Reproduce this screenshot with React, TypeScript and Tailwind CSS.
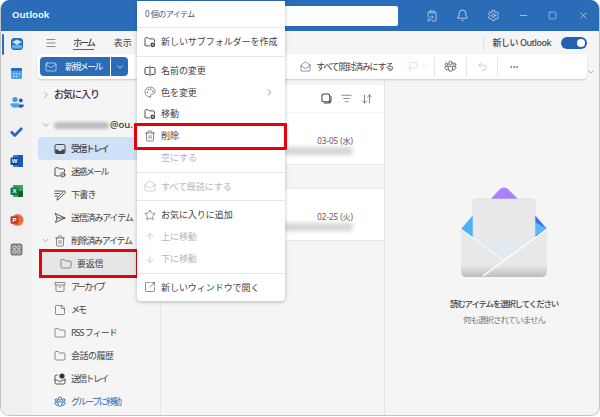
import {
  Archive,
  ArrowDown,
  ArrowDownUp,
  ArrowUp,
  Bell,
  ChevronDown,
  ChevronRight,
  ClipboardPen,
  Ellipsis,
  Flag,
  Folder,
  ListFilter,
  Mail,
  MailOpen,
  Menu,
  Minus,
  Palette,
  Settings,
  Square,
  SquareArrowOutUpRight,
  Star,
  StickyNote,
  Trash2,
  Undo2,
  X,
} from "lucide-react";
import type { ComponentType, ReactNode } from "react";

type IconProps = { className?: string; strokeWidth?: number };
type IconType = ComponentType<IconProps>;

// Outlook glyphs that lucide has no close match for
function Svg({ className, strokeWidth = 1.2, children }: IconProps & { children: ReactNode }) {
  return (
    <svg viewBox="0 0 12 12" className={className} fill="none" stroke="currentColor" strokeWidth={strokeWidth} strokeLinejoin="round" strokeLinecap="round">
      {children}
    </svg>
  );
}

function FolderBadge(p: IconProps) {
  return (
    <Svg {...p} strokeWidth={0.9}>
      <path d="M1 9V2.6c0-.5.4-.9.9-.9h2.3l1.1 1.2h4.3c.5 0 .9.4.9.9v2" />
      <path d="M1 9c0 .5.4.9.9.9h3.6" />
      <circle cx="8.8" cy="8.8" r="2.4" fill="#333" stroke="none" />
      <path d="M8.8 7.7v2.2M7.7 8.8h2.2" stroke="#fff" strokeWidth="0.6" />
    </Svg>
  );
}

function FolderBlock(p: IconProps) {
  return (
    <Svg {...p} strokeWidth={0.9}>
      <path d="M1 9V2.6c0-.5.4-.9.9-.9h2.3l1.1 1.2h4.3c.5 0 .9.4.9.9v2" />
      <path d="M1 9c0 .5.4.9.9.9h3.6" />
      <circle cx="8.8" cy="8.8" r="2.2" />
      <path d="M7.4 10.2l2.8-2.8" />
    </Svg>
  );
}

function Rename(p: IconProps) {
  return (
    <Svg {...p} strokeWidth={1}>
      <path d="M4.5 2.5H2.2c-.7 0-1.2.5-1.2 1.2v4.6c0 .7.5 1.2 1.2 1.2h2.3" />
      <path d="M7.5 2.5h2.3c.7 0 1.2.5 1.2 1.2v4.6c0 .7-.5 1.2-1.2 1.2H7.5" />
      <path d="M6 1v10" />
    </Svg>
  );
}

function InboxFilled(p: IconProps) {
  return (
    <svg viewBox="0 0 12 12" className={p.className}>
      <rect x="1" y="1.5" width="10" height="9" rx="1.6" fill="none" stroke="currentColor" strokeWidth="1" />
      <path d="M1.3 6.5h2.8c.3 1 1 1.5 1.9 1.5s1.6-.5 1.9-1.5h2.8v2.6c0 .8-.5 1.3-1.3 1.3H2.6c-.8 0-1.3-.5-1.3-1.3z" fill="currentColor" />
    </svg>
  );
}

function Outbox(p: IconProps) {
  return (
    <Svg {...p} strokeWidth={0.9}>
      <path d="M3.5 2H2.2C1.5 2 1 2.5 1 3.2v6.6c0 .7.5 1.2 1.2 1.2h7.6c.7 0 1.2-.5 1.2-1.2V6" />
      <path d="M1 7h2.6c.3.8 1.2 1.4 2.4 1.4S8.100 7.800 8.400 7H11" />
      <circle cx="8" cy="3" r="2.6" fill="#333" stroke="none" />
    </Svg>
  );
}

function Draft(p: IconProps) {
  return (
    <Svg {...p} strokeWidth={0.9}>
      <path d="M1 2h8M1 4.500h4.500M1 7h2.500" />
      <path d="M3 10.800l.7-2.400 6-6c.4-.4 1-.4 1.400 0s.4 1 0 1.400l-6 6z" />
    </Svg>
  );
}

function SendOutline(p: IconProps) {
  return (
    <Svg {...p} strokeWidth={0.9}>
      <path d="M1.500 1.500L11 6l-9.500 4.500L3 6zM3 6h8" />
    </Svg>
  );
}

function Group(p: IconProps) {
  return (
    <Svg {...p} strokeWidth={0.9}>
      <circle cx="6" cy="2.600" r="1.600" />
      <circle cx="2.300" cy="4" r="1.200" />
      <circle cx="9.700" cy="4" r="1.200" />
      <path d="M4 5.800h4v2.600a2 2 0 0 1-4 0z" />
      <path d="M4 9.200c-1.800.3-3-.6-3-2.200V6.200h2M8 9.200c1.800.3 3-.6 3-2.200V6.200H9" />
    </Svg>
  );
}

function CopyRound(p: IconProps) {
  return (
    <Svg {...p} strokeWidth={1.1}>
      <rect x="1" y="1" width="8.500" height="8.500" rx="2.200" />
      <path d="M10.900 3.500v4.300c0 1.700-1.400 3.100-3.100 3.100H3.500" />
    </Svg>
  );
}

function RailIcon({ children }: { children: ReactNode }) {
  return <div className="flex h-[29.3px] w-full items-center justify-center">{children}</div>;
}

function Rail() {
  return (
    <div className="relative w-[31px] shrink-0 bg-[#f0f0f0]">
      <div className="absolute left-[1px] top-[3px] h-[21px] w-[2px] rounded bg-[#2b6cb8]" />
      <div className="-mt-[1.6px] flex flex-col">
        <RailIcon>
          <svg width="14" height="14" viewBox="0 0 14 14">
            <rect x="1" y="1" width="12" height="12" rx="3.5" fill="#1b6ec2" />
            <path d="M2 5 L7 2.4 L12 5 L7 8 Z" fill="#bfe2fa" />
            <rect x="2" y="8" width="10" height="3.5" rx="1" fill="#5cb5f0" />
          </svg>
        </RailIcon>
        <RailIcon>
          <svg width="13" height="13" viewBox="0 0 13 13">
            <rect x="1" y="1" width="11" height="11" rx="1.5" fill="#4fa3e8" />
            <rect x="1" y="1" width="11" height="3" rx="1" fill="#1f6fc4" />
            <path d="M3 7h1.400M5.800 7h1.400M8.600 7h1.400M3 9.500h1.400M5.800 9.500h1.400" stroke="#d6ecfb" strokeWidth="1" />
          </svg>
        </RailIcon>
        <RailIcon>
          <svg width="14" height="13" viewBox="0 0 14 13">
            <circle cx="5" cy="3.500" r="2.600" fill="#3f97e6" />
            <circle cx="10.800" cy="4.500" r="1.900" fill="#1f5fb4" />
            <path d="M8 8.500h5a.8.8 0 0 1 .8.8c0 1.500-1.400 2.400-3.200 2.400-1 0-2-.3-2.600-.9z" fill="#1f5fb4" />
            <path d="M.5 8.600C.5 7.800 1.200 7.300 2 7.300h6c.8 0 1.400.5 1.400 1.300 0 2-2 3.200-4.400 3.200S.5 10.600.5 8.600z" fill="#4aa5ee" />
          </svg>
        </RailIcon>
        <RailIcon>
          <svg width="13" height="11" viewBox="0 0 13 11">
            <path d="M1 5.500 L4.800 9.500 L12 2" fill="none" stroke="#2564c4" strokeWidth="2.600" strokeLinejoin="round" />
          </svg>
        </RailIcon>
        <RailIcon>
          <svg width="14" height="14" viewBox="0 0 14 14">
            <rect x="3" y="1" width="10" height="12" rx="1" fill="#2b7cd3" />
            <rect x="8" y="1" width="5" height="12" fill="#185abd" />
            <rect x="0.5" y="3.500" width="8" height="7.500" rx="1" fill="#13459b" />
            <text x="4.500" y="9.400" textAnchor="middle" fontSize="6" fontWeight="700" fill="#fff" fontFamily="Liberation Sans">W</text>
          </svg>
        </RailIcon>
        <RailIcon>
          <svg width="14" height="14" viewBox="0 0 14 14">
            <rect x="3" y="1" width="10" height="12" rx="1" fill="#33a065" />
            <rect x="8" y="7" width="5" height="6" fill="#185c37" />
            <rect x="0.5" y="3.500" width="8" height="7.500" rx="1" fill="#107c41" />
            <text x="4.500" y="9.400" textAnchor="middle" fontSize="6" fontWeight="700" fill="#fff" fontFamily="Liberation Sans">X</text>
          </svg>
        </RailIcon>
        <RailIcon>
          <svg width="14" height="14" viewBox="0 0 14 14">
            <circle cx="7.500" cy="7" r="6" fill="#ed6c47" />
            <rect x="0.5" y="3.200" width="8" height="7.600" rx="1" fill="#c43e1c" />
            <text x="4.500" y="9.400" textAnchor="middle" fontSize="6" fontWeight="700" fill="#fff" fontFamily="Liberation Sans">P</text>
          </svg>
        </RailIcon>
        <RailIcon>
          <svg width="13" height="13" viewBox="0 0 13 13">
            <rect x="0.5" y="0.5" width="12" height="12" rx="2.500" fill="#7f7f7f" />
            <g fill="none" stroke="#e4e4e4" strokeWidth="0.9">
              <circle cx="4.400" cy="4.400" r="1.600" />
              <circle cx="8.600" cy="4.400" r="1.600" />
              <circle cx="4.400" cy="8.600" r="1.600" />
              <circle cx="8.600" cy="8.600" r="1.600" />
            </g>
          </svg>
        </RailIcon>
      </div>
    </div>
  );
}

function FolderRow({
  icon: Icon,
  label,
  track,
  active,
  chevron,
  indent,
  blue,
}: {
  icon: IconType;
  label: string;
  track: string;
  active?: string;
  chevron?: boolean;
  indent?: boolean;
  blue?: boolean;
}) {
  return (
    <div className={`relative flex h-[23px] items-center rounded-sm ${active ?? ""} ${indent ? "ml-[10px] pl-[18px]" : "ml-[6px] pl-[16px]"}`}>
      {chevron && <ChevronDown className="absolute left-[3px] h-[9px] w-[9px] text-[#777]" strokeWidth={1.5} />}
      <Icon className={`mr-[5px] h-[12px] w-[12px] shrink-0 ${blue ? "text-[#2b6cb8]" : "text-[#444]"}`} strokeWidth={1.2} />
      <span className={`whitespace-nowrap text-[9px] ${track} ${blue ? "text-[#2b6cb8]" : "text-[#424242]"}`}>{label}</span>
    </div>
  );
}

function FolderPane() {
  return (
    <div className="w-[129px] shrink-0 overflow-hidden border-r border-[#e8e8e8] pt-[4px]">
      <div className="flex h-[23px] items-center pl-[9px]">
        <ChevronRight className="mr-[3px] h-[10px] w-[10px] text-[#777]" strokeWidth={1.5} />
        <span className="text-[10px] font-medium tracking-[-1px] text-[#333]">お気に入り</span>
      </div>
      <div className="flex h-[31px] items-end pb-[2px] pl-[9px]">
        <div className="flex h-[20px] items-center">
          <ChevronDown className="mr-[3px] h-[10px] w-[10px] text-[#777]" strokeWidth={1.5} />
          <div className="h-[7px] w-[55px] rounded-sm bg-[#bdbdbd] blur-[1.5px]" />
          <span className="ml-[1px] text-[9.5px] font-medium text-[#333]">@ou.</span>
        </div>
      </div>
      <FolderRow icon={InboxFilled} label="受信トレイ" track="tracking-[-1.6px]" active="bg-[#cfe1f8] font-medium" />
      <FolderRow icon={FolderBlock} label="迷惑メール" track="tracking-[-1.6px]" />
      <FolderRow icon={Draft} label="下書き" track="tracking-[-0.7px]" />
      <FolderRow icon={SendOutline} label="送信済みアイテム" track="tracking-[-1.2px]" />
      <FolderRow icon={Trash2} label="削除済みアイテム" track="tracking-[-1.3px]" chevron />
      <FolderRow icon={Folder} label="要返信" track="tracking-[-0.3px]" indent active="bg-[#e6e6e6]" />
      <FolderRow icon={Archive} label="アーカイブ" track="tracking-[-2.4px]" />
      <FolderRow icon={StickyNote} label="メモ" track="tracking-[-2px]" />
      <FolderRow icon={Folder} label="RSS フィード" track="tracking-[-1px]" />
      <FolderRow icon={Folder} label="会話の履歴" track="tracking-[-0.5px]" />
      <FolderRow icon={Outbox} label="送信トレイ" track="tracking-[-1.7px]" />
      <FolderRow icon={Group} label="グループに移動" track="tracking-[-1.9px]" blue />
    </div>
  );
}

function MailRow({ date }: { date: string }) {
  return (
    <div className="flex h-[51px] flex-col items-end justify-end bg-white pb-[9px] pr-[31px]">
      <span className="text-[8px] leading-[12px] text-[#555]">{date}</span>
      <div className="h-[8px] w-[70px] rounded-sm bg-[#d5d5d5] blur-[2px]" />
    </div>
  );
}

function MessageList() {
  return (
    <div className="w-[224px] shrink-0 border-r border-[#e4e4e4] pt-[6px]">
      <div className="flex h-[27px] items-center justify-end gap-[9px] rounded-t bg-white pr-[11px] text-[#444]">
        <CopyRound className="h-[11px] w-[11px]" />
        <ListFilter className="h-[11px] w-[11px]" strokeWidth={1.3} />
        <ArrowDownUp className="h-[12px] w-[12px]" strokeWidth={1.3} />
      </div>
      <div className="mt-px">
        <MailRow date="03-05 (水)" />
      </div>
      <div className="h-[25px] border-y border-[#ececec]" />
      <MailRow date="02-25 (火)" />
      <div className="h-px bg-[#e8e8e8]" />
    </div>
  );
}

function ReadingPane() {
  return (
    <div className="flex flex-1 flex-col items-center pl-[24px] pt-[107px]">
      <svg width="88" height="93" viewBox="0 0 88 93">
        <defs>
          <linearGradient id="paper" x1="0" y1="0" x2="0" y2="1">
            <stop offset="0.45" stopColor="#e9e9e9" />
            <stop offset="1" stopColor="#d9edf5" />
          </linearGradient>
          <linearGradient id="body" x1="0" y1="0" x2="0" y2="1">
            <stop offset="0.75" stopColor="#e8e8e8" />
            <stop offset="1" stopColor="#bdbdbd" />
          </linearGradient>
        </defs>
        <path d="M29 15 L40 3 Q44 0 48 3 L60 15 Z" fill="#a982f5" />
        <path d="M1 43 L14 28 L14 56 Z" fill="#4fb0f7" />
        <path d="M87 43 L74 28 L74 56 Z" fill="#3b72f0" />
        <path d="M75 36 L87 43 L75 50 Z" fill="#56b8f8" />
        <rect x="13" y="13" width="62" height="70" rx="3" fill="url(#paper)" stroke="#dcdcdc" strokeWidth="0.7" />
        <path d="M1 43 L43 74 L23 91 L6 91 Q1 91 1 85 Z" fill="url(#body)" />
        <path d="M87 43 L87 85 Q87 91 81 91 L23 91 Z" fill="url(#body)" />
        <path d="M1 43 L43 74" stroke="#fff" strokeWidth="1" />
        <path d="M87 43 L23 90" stroke="#fff" strokeWidth="1.400" />
      </svg>
      <div className="mt-[18px] text-[8.5px] font-medium leading-[14px] tracking-[-1.2px] text-[#444]">
        読むアイテムを選択してください
      </div>
      <div className="mt-[2px] text-[8.5px] leading-[14px] tracking-[-1px] text-[#777]">何も選択されていません</div>
    </div>
  );
}

function MenuItem({
  icon: Icon,
  label,
  disabled,
  arrow,
}: {
  icon?: IconType;
  label: string;
  disabled?: boolean;
  arrow?: boolean;
}) {
  return (
    <div className={`flex h-[21.75px] items-center pl-[7px] pr-[10px] ${disabled ? "text-[#b5b5b5]" : "text-[#424242]"}`}>
      <div className="mr-[5px] flex w-[12px] justify-center">
        {Icon && <Icon className="h-[12px] w-[12px]" strokeWidth={1.2} />}
      </div>
      <span className="flex-1 whitespace-nowrap text-[9px] tracking-[-0.05px]">{label}</span>
      {arrow && <ChevronRight className="h-[11px] w-[11px] text-[#555]" strokeWidth={1.3} />}
    </div>
  );
}

function MenuDivider() {
  return <div className="my-[3px] h-px bg-[#e6e6e6]" />;
}

function ContextMenu() {
  return (
    <div className="absolute left-[137px] top-[1px] z-20 w-[148px] rounded-b bg-white pb-[2.5px] shadow-[0_1px_4px_rgba(0,0,0,0.25)]">
      <div className="flex h-[23px] items-center pl-[8px] pt-[3px] text-[8px] tracking-[-0.5px] text-[#555]">0 個のアイテム</div>
      <MenuDivider />
      <MenuItem icon={FolderBadge} label="新しいサブフォルダーを作成" />
      <MenuDivider />
      <MenuItem icon={Rename} label="名前の変更" />
      <MenuItem icon={Palette} label="色を変更" arrow />
      <MenuItem icon={FolderBadge} label="移動" />
      <MenuItem icon={Trash2} label="削除" />
      <MenuItem label="空にする" disabled />
      <MenuDivider />
      <MenuItem icon={MailOpen} label="すべて既読にする" disabled />
      <MenuDivider />
      <MenuItem icon={Star} label="お気に入りに追加" />
      <MenuItem icon={ArrowUp} label="上に移動" disabled />
      <MenuItem icon={ArrowDown} label="下に移動" disabled />
      <MenuDivider />
      <MenuItem icon={SquareArrowOutUpRight} label="新しいウィンドウで開く" />
    </div>
  );
}

export default function App() {
  return (
    <div className="relative h-[417px] w-[600px] overflow-hidden bg-white font-['Noto_Sans','Noto_Sans_CJK_JP',sans-serif]">
      <div className="flex h-[416px] w-[600px] flex-col overflow-hidden rounded-[9px] border-b border-l border-r border-[#c4c4c4] bg-[#f5f5f5]">
        {/* Title bar */}
        <div className="flex h-[31px] shrink-0 items-center bg-[#2b6cb8] text-white">
          <span className="ml-[11px] w-[41px] text-[9.5px] font-semibold">Outlook</span>
          <div className="ml-[226px] h-[20px] w-[119px] shrink-0 rounded-[2px] bg-white" />
          <div className="ml-[27.5px] flex items-center gap-[18px]">
            <ClipboardPen className="h-[12px] w-[12px]" strokeWidth={1.2} />
            <Bell className="h-[13px] w-[13px]" strokeWidth={1.2} />
            <Settings className="h-[13px] w-[13px]" strokeWidth={1.2} />
            <Minus className="h-[11px] w-[11px]" strokeWidth={1.2} />
            <Square className="ml-[1.5px] h-[9px] w-[9px]" strokeWidth={1.2} />
            <X className="ml-[2.5px] h-[11px] w-[11px]" strokeWidth={1.2} />
          </div>
        </div>

        <div className="flex min-h-0 flex-1">
          <Rail />
          <div className="flex min-w-0 flex-1 flex-col">
            {/* Tabs */}
            <div className="flex h-[23px] shrink-0 items-center pl-[13px] text-[#424242]">
              <Menu className="h-[12px] w-[12px]" strokeWidth={1.2} />
              <div className="relative ml-[16px] flex h-full items-center text-[9px] font-medium tracking-[-2px]">
                ホーム
                <div className="absolute bottom-[4px] left-0 h-[1.5px] w-[21px] bg-[#2b6cb8]" />
              </div>
              <span className="ml-[20px] text-[9px]">表示</span>
              <div className="ml-auto mr-[9px] h-[14px] w-px bg-[#e0e0e0]" />
              <span className="text-[9px] font-medium tracking-[-0.5px] text-[#444]">新しい Outlook</span>
              <div className="ml-[10px] mr-[12px] flex h-[12px] w-[26px] items-center justify-end rounded-full bg-[#2462b0] pr-[2px]">
                <div className="h-[8px] w-[8px] rounded-full bg-white" />
              </div>
            </div>

            {/* Toolbar */}
            <div className="relative ml-[5px] mr-[12px] flex h-[25px] shrink-0 items-center rounded bg-white pl-[3px] text-[#424242] shadow-[0_1px_2px_rgba(0,0,0,0.18)]">
              <div className="flex h-[19px] w-[70px] shrink-0 items-center rounded-l-sm bg-[#2b6cb8] pl-[5px] text-white">
                <Mail className="mr-[8px] h-[12px] w-[12px]" strokeWidth={1.2} />
                <span className="whitespace-nowrap text-[9px] tracking-[-1.6px]">新規メール</span>
              </div>
              <div className="ml-px flex h-[19px] w-[17px] shrink-0 items-center justify-center rounded-r-sm bg-[#2b6cb8] text-white">
                <ChevronDown className="h-[10px] w-[10px]" strokeWidth={1.5} />
              </div>
              <MailOpen className="ml-[172px] h-[11px] w-[11px]" strokeWidth={1.2} />
              <span className="ml-[5px] whitespace-nowrap text-[9px] tracking-[-1.2px]">すべて開封済みにする</span>
              <Flag className="ml-[14.5px] h-[11px] w-[11px] text-[#f0b9bd]" strokeWidth={1.2} />
              <ChevronDown className="ml-[2px] h-[7px] w-[7px] text-[#ccc]" />
              <div className="ml-[6px] h-[20px] w-px bg-[#e6e6e6]" />
              <Group className="ml-[9px] h-[13px] w-[13px] text-[#666]" />
              <div className="ml-[9px] h-[20px] w-px bg-[#e6e6e6]" />
              <Undo2 className="ml-[10px] h-[11px] w-[11px] text-[#aaa]" strokeWidth={1.2} />
              <div className="ml-[9.5px] h-[20px] w-px bg-[#e6e6e6]" />
              <Ellipsis className="ml-[10.5px] h-[10px] w-[10px]" strokeWidth={1.6} />
              <ChevronDown className="absolute -right-[8px] top-[14px] h-[8px] w-[8px] text-[#888]" />
            </div>

            <div className="flex min-h-0 flex-1">
              <FolderPane />
              <MessageList />
              <ReadingPane />
            </div>
          </div>
        </div>
      </div>

      {/* Red callouts */}
      <div className="absolute left-[39px] top-[249px] z-10 h-[29px] w-[100px] border-[3px] border-[#e8000b]" />
      <ContextMenu />
      <div className="absolute left-[134px] top-[123px] z-30 h-[27px] w-[153px] rounded-[1px] border-[3px] border-[#e8000b]" />
    </div>
  );
}
